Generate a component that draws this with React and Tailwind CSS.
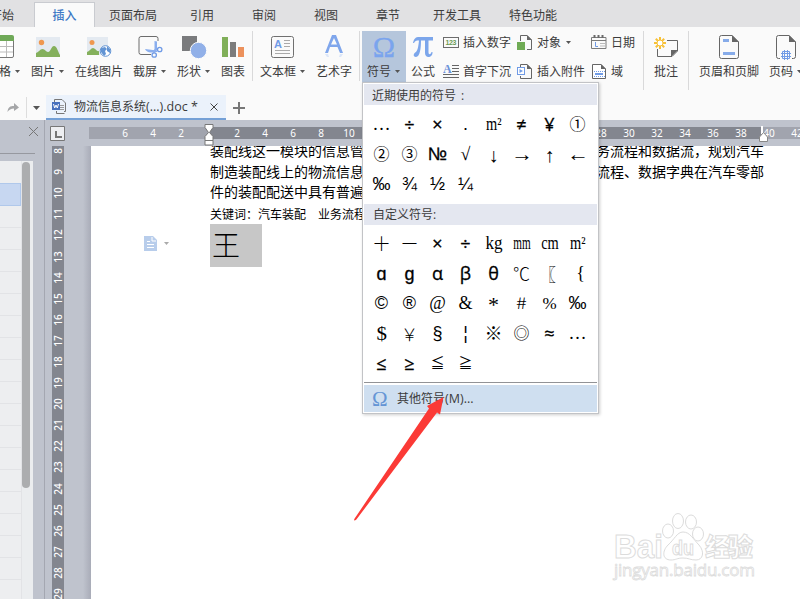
import React from "react";

const UI = "font-['Open_Sans','Noto_Sans_CJK_SC',sans-serif]";

function Arrow({ className = "" }) {
  return (
    <svg className={`h-[3px] w-[5px] shrink-0 ${className}`} viewBox="0 0 5 3" fill="#555">
      <path d="M0 0H5L2.500 3Z" />
    </svg>
  );
}

function Big({ label, arrow, className, icon, children }) {
  return (
    <div className={`flex h-[51px] shrink-0 flex-col ${className}`}>
      <svg className={`h-7 w-7 shrink-0 ${icon}`} viewBox="0 0 28 28" fill="none">
        {children}
      </svg>
      <div className="flex h-[22px] items-center whitespace-nowrap">
        {label}
        {arrow && <Arrow className="ml-1" />}
      </div>
    </div>
  );
}

function Small({ label, arrow, children }) {
  return (
    <div className="flex h-[29px] items-center whitespace-nowrap">
      <svg className="mr-1 h-[17px] w-4 shrink-0" viewBox="0 0 16 17" fill="none">
        {children}
      </svg>
      {label}
      {arrow && <Arrow className="ml-[5px]" />}
    </div>
  );
}

const Separator = ({ className }) => <div className={`w-px shrink-0 bg-[#d9d9da] ${className}`} />;

function MenuTabs() {
  return (
    <div className="flex h-[27px] shrink-0 items-center whitespace-nowrap bg-[#e1e1e3] pt-[5px]">
      <span className="-ml-[10px]">开始</span>
      <span className="ml-5 flex h-[25px] w-[61px] items-center justify-center self-end border border-b-0 border-[#c9cbd0] bg-[#fafafa] pt-px font-medium text-[#3f7ac6]">
        插入
      </span>
      <span className="ml-[14px]">页面布局</span>
      <span className="ml-[33px]">引用</span>
      <span className="ml-[38px]">审阅</span>
      <span className="ml-[38px]">视图</span>
      <span className="ml-[38px]">章节</span>
      <span className="ml-[33px]">开发工具</span>
      <span className="ml-[28px]">特色功能</span>
    </div>
  );
}

function Ribbon() {
  return (
    <div className="flex h-[68px] shrink-0 overflow-hidden bg-[#fafafa] pt-1">
      <Big label="表格" arrow className="-ml-[13px] w-11 pt-[2px]" icon="ml-0">
        <path d="M2.500 3.500H25a1.500 1.500 0 0 1 1.500 1.500V23a1.500 1.500 0 0 1-1.500 1.500H2.500Z" fill="#fff" stroke="#777" />
        <path d="M2 2H25a2 2 0 0 1 2 2V8H2Z" fill="#6fa958" />
        <path d="M2 13.500H26M2 19H26M10.500 8V24M19.500 8V24" stroke="#bbb" />
      </Big>
      <Big label="图片" arrow className="w-11 pt-[2px]" icon="ml-[3px]">
        <path d="M2 4H26V24H2Z" fill="#e4eaf1" />
        <circle cx="7.500" cy="9.500" r="2.700" fill="#ef9850" />
        <path d="M2 24V20C5 19 6 16 8.500 16C11 16 12 19 14 19C17 19 17 13 20 13C23 13 24 19 26 22V24Z" fill="#84b05c" />
      </Big>
      <Big label="在线图片" className="w-[58px] pt-[2px]" icon="ml-[10px]">
        <path d="M2 4H23V22H2Z" fill="#e4eaf1" />
        <circle cx="7" cy="9.500" r="2.500" fill="#ef9850" />
        <path d="M2 22V19C5 18 6 15 8 15C10 15 12 19 14 18V22Z" fill="#84b05c" />
        <circle cx="20.500" cy="18" r="5.300" fill="#fff" stroke="#6294d4" />
        <path d="M16 15L20 14L22 16L20 18L21 21L19 23L16 19ZM22 13L25 16V20L22 18Z" fill="#6294d4" />
      </Big>
      <Big label="截屏" arrow className="w-11 pt-[2px]" icon="ml-[3px]">
        <path d="M15 21.500H5A2 2 0 0 1 3 19.500V5.500A2 2 0 0 1 5 3.500H20A2 2 0 0 1 22 5.500V8" stroke="#6c6c6c" />
        <path d="M18.500 8L21 8.500V17L18 20L16.500 19L18.500 16Z" fill="#8aaeee" />
        <path d="M9 16L21 17.500V19L15 19.500C12 19.500 10 18 9 16Z" fill="#8aaeee" />
        <circle cx="23.700" cy="16.500" r="2.200" stroke="#709be6" strokeWidth="1.300" />
        <circle cx="18.200" cy="22" r="2.200" stroke="#709be6" strokeWidth="1.300" />
      </Big>
      <Big label="形状" arrow className="w-11 pt-[2px]" icon="ml-[3px]">
        <path d="M2 3H17V18H2Z" fill="#7a7b7d" />
        <circle cx="18.500" cy="17.500" r="8.200" fill="#91b0e8" stroke="#fafafa" />
      </Big>
      <Big label="图表" className="w-[31px] pt-[2px]" icon="-ml-[1px]">
        <path d="M2 4H8V24H2Z" fill="#80af59" />
        <path d="M10 9H16V24H10Z" fill="#7c7c7c" />
        <path d="M18 14H24V24H18Z" fill="#ec915c" />
      </Big>
      <Separator className="h-[50px]" />
      <Big label="文本框" arrow className="ml-[7px] w-14 pt-[2px]" icon="ml-[9px]">
        <rect x="2.500" y="3.500" width="22" height="21" rx="2" stroke="#707070" />
        <text x="5" y="15" fontSize="11" fontWeight="700" fontFamily="Liberation Sans" fill="#709be6">A</text>
        <path d="M15 7.500H21M15 10.500H21M15 13.500H21M6 17.500H21M6 20.500H21" stroke="#aaa" />
      </Big>
      <Big label="艺术字" className="w-[43px] pt-[2px]" icon="ml-1">
        <path d="M5 20L12 2H16L23 20H20L17.500 14H10L8 20ZM11 11.500H17L14 5Z" fill="#7fa6ec" fillRule="evenodd" />
        <path d="M5 21H8L9 24H7ZM20 21H23L21 24H19Z" fill="#dce6f8" />
      </Big>
      <Separator className="h-[50px]" />
      <Big label="符号" arrow className="ml-[2px] w-11 bg-[#b5c6dc] pl-[5px] pt-[2px]" icon="ml-[3px]">
        <text x="14" y="24" textAnchor="middle" fontSize="30" fontFamily="Liberation Serif" fill="#7aa4ee" stroke="#7aa4ee" strokeWidth=".3">Ω</text>
      </Big>
      <Big label="公式" className="ml-[5px] w-[31px] pt-[2px]" icon="-ml-[2px]">
        <path d="M4 10C5 5 7 4 10 4H24V7.500H19.500V19C19.500 22 21.500 22 22.500 19H23.500C24 25 16 26 16 20V7.500H12C12 15 11 24 7 24C3.500 24 4.500 20 7 19C9 17 9.500 12 10 7.500C7 7.500 6 8 5 10Z" fill="#7ca6eb" />
      </Big>
      <div className="-mt-[3px] ml-px w-[74px] shrink-0">
        <Small label="插入数字">
          <rect x=".5" y="3.500" width="15" height="10" stroke="#6c6c6c" />
          <text x="2.500" y="11" fontSize="7" fontWeight="600" textLength="11" fontFamily="Liberation Sans" fill="#6a9b54">123</text>
        </Small>
        <Small label="首字下沉">
          <text x="0" y="9.500" fontSize="12" fontWeight="700" fontFamily="Liberation Serif" fill="#6b91d8">A</text>
          <path d="M9 2.500H16M9 5.500H16M9 8.500H16M0 11.500H16M0 14.500H16" stroke="#666" />
        </Small>
      </div>
      <div className="-mt-[3px] w-[74px] shrink-0">
        <Small label="对象" arrow>
          <path d="M3.500 7V1.500H10L14.500 6V15.500H10" stroke="#666" />
          <path d="M10 1V6H15Z" fill="#666" />
          <path d="M0 8H8V16H0Z" fill="#6fab55" />
        </Small>
        <Small label="插入附件">
          <path d="M3.500 4V1.500H10L14.500 6V15.500H3.500V13" stroke="#666" />
          <path d="M10 1V6H15Z" fill="#666" />
          <rect x=".5" y="4.500" width="7" height="7" fill="#fff" stroke="#709be6" />
          <path d="M2.500 6L6 8L2.500 10Z" fill="#709be6" />
        </Small>
      </div>
      <div className="-mt-[3px] w-[52px] shrink-0">
        <Small label="日期">
          <path d="M.5 3.500H15V14.500H.5ZM.5 6.500H15" stroke="#7c7c7c" />
          <path d="M3.500 1V4M7.500 1V4M11.500 1V4" stroke="#6a6a6a" strokeWidth="2" />
          <path d="M4.500 8V12.500H7" stroke="#709be6" />
          <path d="M9 9.500H14M9 12H14" stroke="#bbb" />
        </Small>
        <Small label="域">
          <path d="M1.500 1.500H10L14.500 6V15.500H1.500Z" fill="#fff" stroke="#666" />
          <path d="M10 1V6H15Z" fill="#666" />
          <path d="M3 8.500H14M3 13.500H14" stroke="#709be6" strokeDasharray="1 1" />
          <path d="M4 11H12" stroke="#709be6" strokeWidth="2" />
        </Small>
      </div>
      <Separator className="h-[59px]" />
      <Big label="批注" className="ml-[10px] w-[34px] pt-[2px]" icon="-ml-[2px]">
        <path d="M5.500 16V23.500H20L25.500 18V7.500H15" stroke="#666" />
        <path d="M19 17H26L19 24Z" fill="#666" />
        <path d="M8 4V16M2 10H14M3.800 5.800L12.200 14.200M12.200 5.800L3.800 14.200" stroke="#f7c138" strokeWidth="2" />
        <circle cx="8" cy="10" r="3" fill="#fff" stroke="#f7c138" />
      </Big>
      <Separator className="h-[59px]" />
      <Big label="页眉和页脚" className="ml-[10px] w-[70px] pt-[2px]" icon="ml-4">
        <path d="M6.500 2.500H17L23.500 9V23.500A2 2 0 0 1 21.500 25.500H6.500A2 2 0 0 1 4.500 23.500V4.500A2 2 0 0 1 6.500 2.500Z" stroke="#666" />
        <path d="M17 2V9H24Z" fill="#666" />
        <path d="M8 6H14V9H8ZM8 19H20V22H8Z" fill="#86abe9" />
      </Big>
      <Big label="页码" arrow className="w-[40px] pt-[2px]" icon="ml-1">
        <path d="M7 25.500H5.500A2 2 0 0 1 3.500 23.500V4.500A2 2 0 0 1 5.500 2.500H16L22.500 9V23.500A2 2 0 0 1 20.500 25.500H19" stroke="#666" />
        <path d="M16 2V9H23Z" fill="#666" />
        <path d="M9.500 18.500H16.500V25.500H9.500ZM8 20.500H18M8 23.500H18M11.500 17V27M14.500 17V27" stroke="#709be6" />
      </Big>
    </div>
  );
}

function DocumentTabs() {
  return (
    <div className="flex h-[25px] shrink-0 items-center bg-[#fafafa]">
      <svg className="ml-[7px] h-4 w-3 shrink-0" viewBox="0 0 12 16">
        <path d="M.5 12C1 7 3 6 7 6V3L12 7.500L7 11V8.500C4 8.500 2 10 .5 12Z" fill="#a5a6a8" />
      </svg>
      <div className="ml-[7px] h-[21px] w-px bg-[#ddd]" />
      <svg className="ml-[6px] h-1 w-[7px]" viewBox="0 0 7 4"><path d="M0 0H7L3.500 4Z" fill="#555" /></svg>
      <div className="ml-[6px] flex h-[25px] w-[180px] items-center whitespace-nowrap border-b-2 border-[#74a0d6] bg-[#ebf2fb] pl-[6px]">
        <svg className="h-[15px] w-[15px] shrink-0" viewBox="0 0 15 15" fill="none">
          <path d="M2.500 3V.500H10L13.500 4V12.500H12M4.500 12V14.500H12.500" stroke="#777" />
          <path d="M8 6.500H12M8 8.500H12M8 10.500H12" stroke="#999" />
          <path d="M0 3H8V11H0Z" fill="#4870bd" />
          <path d="M1.500 5L2.700 9L4 6L5.300 9L6.500 5" stroke="#fff" />
        </svg>
        <span className="ml-[7px] w-[136px] pt-px">物流信息系统<span className="text-[12.500px]">(...).doc *</span></span>
        <svg className="h-2 w-2 shrink-0" viewBox="0 0 8 8"><path d="M.5.5L7.500 7.500M7.500.5L.5 7.500" stroke="#444" /></svg>
      </div>
      <svg className="ml-[7px] h-3 w-3" viewBox="0 0 12 12"><path d="M6 0V12M0 6H12" stroke="#777" strokeWidth="2" /></svg>
    </div>
  );
}

function SidePanel() {
  return (
    <div className="flex w-[45px] shrink-0 flex-col border-r border-[#a4a7b1]">
      <div className="flex h-[34px] w-[35px] shrink-0 justify-end border-b border-[#96989f] pt-[7px]">
        <svg className="-mr-[3px] h-[9px] w-[9px]" viewBox="0 0 9 9"><path d="M0 0L9 9M9 0L0 9" stroke="#777" /></svg>
      </div>
      <div className="mt-[7px] flex w-[33px] flex-1 bg-[#ebedef]">
        <div className="w-[22px] shrink-0 border-r border-[#e2e3e6] bg-[#edeef0]">
          <div className="h-[22px]" />
          <div className="h-[23px] border border-l-0 border-[#b0c8eb] bg-[#c7d7f1]" />
          {Array.from({ length: 17 }, (_, i) => (
            <div key={i} className="h-[22px] border-b border-[#e2e3e6]" />
          ))}
        </div>
        <div className="mt-[1px] h-[326px] w-2 rounded-full bg-[#acadaf]" />
      </div>
    </div>
  );
}

const H_RULER = [6, 4, 2, "", ...Array.from({ length: 21 }, (_, i) => (i + 1) * 2)];
const V_RULER = Array.from({ length: 22 }, (_, i) => i + 8);

function HorizontalRuler() {
  return (
    <div className="relative flex h-[26px] shrink-0 items-start pt-[6px]">
      <svg className="ml-[5px] h-[15px] w-[15px] shrink-0" viewBox="0 0 15 15" fill="none">
        <path d="M.5.5H14.500V14.500H.5Z" fill="#eeeff2" stroke="#777" />
        <path d="M6 5V11H12" stroke="#777" strokeWidth="2" />
      </svg>
      <div className="ml-6 mt-[1px] flex h-3 flex-1 overflow-hidden bg-[linear-gradient(to_right,#a1a4ae_120px,#83868f_120px,#83868f_674px,#a1a4ae_674px)] pl-[22px] font-['Noto_Sans',sans-serif] text-[10px] leading-3 text-white">
        {H_RULER.map((n, i) => (
          <span key={i} className="w-7 shrink-0 text-center">{n}</span>
        ))}
      </div>
      <svg className="absolute left-[159px] top-[4px] h-[22px] w-[10px]" viewBox="0 0 10 22" fill="#fff" stroke="#777">
        <path d="M1 .5H9V3.500L5.500 8.500L9 12.500V16.500H1V12.500L4.500 8.500L1 3.500ZM1 16.500H9V21H1Z" />
      </svg>
      <svg className="absolute left-[714px] top-[6px] h-4 w-[9px]" viewBox="0 0 9 16" fill="#fff">
        <path d="M2 0H4V8H2Z" />
        <path d="M4.500 6.500L8.500 11V15.500H.5V11Z" stroke="#888" />
      </svg>
    </div>
  );
}

function Page() {
  return (
    <div className="flex-1 overflow-hidden bg-white pl-[119px] font-['Noto_Sans_CJK_SC',sans-serif] text-black">
      <div className="-mt-[6px] w-[554px] text-[14px] leading-[20.500px]">
        <div className="flex justify-between whitespace-nowrap"><span>装配线这一模块的信息管</span><span>务流程和数据流，规划汽车</span></div>
        <div className="flex justify-between whitespace-nowrap"><span>制造装配线上的物流信息</span><span>流程、数据字典在汽车零部</span></div>
        <div>件的装配配送中具有普遍</div>
      </div>
      <div className="mt-[1px] h-[21px] text-[12px] leading-[21px]">关键词：汽车装配　业务流程</div>
      <div className="-ml-[66px] flex h-[43px] items-center">
        <svg className="-mt-[3px] h-[15px] w-[13px]" viewBox="0 0 13 15" fill="none">
          <path d="M0 0H9L13 4V15H0Z" fill="#b8cdeb" />
          <path d="M8 1V5H12M3 5.500H6M3 8.500H10M3 11.500H10" stroke="#fff" />
        </svg>
        <svg className="-mt-1 ml-[7px] h-[3px] w-[5px]" viewBox="0 0 5 3"><path d="M0 0H5L2.500 3Z" fill="#aaa" /></svg>
        <div className="ml-[41px] flex h-[43px] w-[52px] items-center bg-[#c7c7c7] pb-[2px] pl-[2px] text-[28px] font-light">王</div>
      </div>
    </div>
  );
}

function Workspace() {
  return (
    <div className="flex min-h-0 flex-1 bg-[#bfc3cd]">
      <SidePanel />
      <div className="flex min-w-0 flex-1 flex-col">
        <HorizontalRuler />
        <div className="flex min-h-0 flex-1">
          <div className="ml-[7px] w-3 shrink-0 overflow-hidden bg-[#83868f] font-['Noto_Sans',sans-serif] text-[10px] font-medium text-white">
            <div className="-mt-[5.500px]">
              {V_RULER.map((n) => (
                <div key={n} className="flex h-[21.100px] items-center justify-center"><span className="-rotate-90 leading-3">{n}</span></div>
              ))}
            </div>
          </div>
          <div className="ml-[19px] w-2 shrink-0 bg-gradient-to-r from-[#bfc3cd] to-[#a9acb8]" />
          <Page />
        </div>
      </div>
    </div>
  );
}

const A = "font-['Liberation_Sans',sans-serif] text-[18px]";
const S = "font-['Liberation_Serif',serif] text-[18px]";
const C = "font-['Noto_Sans_CJK_SC',sans-serif] text-[16px] font-light";
const L = "font-['Open_Sans',sans-serif] text-[18px] font-medium [-webkit-text-stroke:0.3px_black]";
const ARROW = "font-['Liberation_Serif',serif] text-[20px] scale-x-110";
const V_ARROW = "font-['Liberation_Serif',serif] text-[20px] translate-y-px";
const M2 = "font-['Liberation_Serif',serif] text-[18px] scale-x-[.8]";
const RING = "font-['Noto_Sans_CJK_SC',sans-serif] text-[16px] -translate-y-px";

const RECENT = [
  ["…", S], ["÷", L], ["×", L], [".", A], ["m²", M2], ["≠", L], ["¥", L], ["①", RING],
  ["②", RING], ["③", RING], ["№", "font-['Liberation_Sans',sans-serif] text-[18px] [-webkit-text-stroke:0.3px_black]"], ["√", S], ["↓", V_ARROW], ["→", ARROW], ["↑", V_ARROW], ["←", ARROW],
  ["‰", A], ["¾", A], ["½", A], ["¼", A],
];

const CUSTOM = [
  ["＋", "font-['Noto_Sans_CJK_SC',sans-serif] text-[19px] font-light -translate-y-px"], ["－", "font-['Noto_Sans_CJK_SC',sans-serif] text-[19px] font-light -translate-y-px"], ["×", L], ["÷", L],
  ["kg", "font-['Liberation_Serif',serif] text-[18px] scale-x-95"], ["mm", "font-['Liberation_Serif',serif] text-[18px] scale-x-[.62]"], ["cm", "font-['Liberation_Serif',serif] text-[18px] scale-x-[.8]"], ["m²", M2],
  ["ɑ", L], ["ɡ", L], ["α", L], ["β", L], ["θ", L], ["℃", "font-['Noto_Sans_CJK_SC',sans-serif] text-[17px] font-light -translate-y-px"], ["〖", "font-['Noto_Sans_CJK_SC',sans-serif] text-[17px] -translate-x-[2px]"], ["{", "font-['Liberation_Serif',serif] text-[18px] translate-x-[3px]"],
  ["©", A], ["®", A], ["@", S], ["&", S], ["*", "font-['Liberation_Serif',serif] text-[22px] translate-y-[2px]"], ["#", "font-['Noto_Sans_CJK_SC',sans-serif] text-[16px] font-light scale-x-125 -translate-y-px"], ["%", "font-['Liberation_Serif',serif] text-[17px]"], ["‰", A],
  ["$", "font-['Liberation_Serif',serif] text-[19px] scale-x-110"], ["￥", "font-['Noto_Sans_CJK_SC',sans-serif] text-[17px] font-light"], ["§", A], ["¦", A], ["※", "font-['Noto_Sans_CJK_SC',sans-serif] text-[18px] font-light -translate-y-px"], ["◎", "font-['Noto_Sans_CJK_SC',sans-serif] text-[16px] -translate-y-px"], ["≈", L], ["…", S],
  ["≤", L], ["≥", L], ["≦", "font-['Noto_Sans_CJK_SC',sans-serif] text-[14px] -translate-y-px"], ["≧", "font-['Noto_Sans_CJK_SC',sans-serif] text-[14px] -translate-y-px"],
];

function SymbolGrid({ items, className }) {
  return (
    <div className={`grid grid-cols-[repeat(8,28px)] pl-[3.500px] text-black ${className}`}>
      {items.map(([glyph, style], i) => (
        <div key={i} className="flex items-center justify-center overflow-visible whitespace-nowrap leading-none">
          <span className={style}>{glyph}</span>
        </div>
      ))}
    </div>
  );
}

function SymbolMenu() {
  return (
    <div className="absolute left-[362px] top-[82px] flex h-[332px] w-[237px] flex-col border border-[#c2c3c6] bg-white p-px shadow-[1px_1px_3px_rgba(0,0,0,0.2)]">
      <div className="flex h-[21px] shrink-0 items-center bg-[#e4e7f0] pl-2 pt-[3px]">近期使用的符号<span className="ml-1 pl-px">:</span></div>
      <SymbolGrid items={RECENT} className="mt-1 auto-rows-[30px]" />
      <div className="mt-[5px] flex h-[21px] shrink-0 items-center bg-[#e4e7f0] pl-[9px]">自定义符号:</div>
      <SymbolGrid items={CUSTOM} className="mt-[3px] auto-rows-[30px]" />
      <div className="mt-1 h-px shrink-0 bg-[#929396]" />
      <div className="mt-[2px] flex h-[27px] shrink-0 items-center bg-[#cfdff0] pl-2">
        <span className="w-[25px] font-['Liberation_Serif',serif] text-[21px] text-[#6595d5]">Ω</span>
        <span>其他符号<span className="text-[12.500px]">(M)...</span></span>
      </div>
    </div>
  );
}

function Pointer() {
  return (
    <svg className="absolute left-[350px] top-[392px] h-[132px] w-[100px]" viewBox="0 0 100 132">
      <path d="M4 128.500L6 128L87 20.500L90 22.500L93.500 5L77 14L79 16.500L4.300 127Z" fill="#fb3a36" />
    </svg>
  );
}

function Watermark() {
  return (
    <svg className="absolute left-[606px] top-[508px] h-[76px] w-[164px]" viewBox="0 0 164 76" fill="#fff" stroke="#dcdcdc">
      <g fontFamily="Liberation Sans" fontWeight="700">
        <text x="8" y="50" fontSize="33" textLength="49" lengthAdjust="spacingAndGlyphs">Bai</text>
        <path d="M77 24C84 24 87 31 93 37C99 44 97 52 90 52C84 52 83 50 77 50C71 50 70 52 65 52C56 52 56 43 62 37C68 32 71 24 77 24Z" />
        <ellipse cx="62" cy="23" rx="5.500" ry="7" />
        <ellipse cx="72" cy="13" rx="5.500" ry="7.500" />
        <ellipse cx="85" cy="14" rx="5.500" ry="7" />
        <ellipse cx="92" cy="26" rx="5.500" ry="7" />
        <text x="66" y="47" fontSize="20" textLength="22" lengthAdjust="spacingAndGlyphs">du</text>
      </g>
      <text x="99" y="48" fontSize="25" fontWeight="900" fontFamily="Noto Sans CJK SC" textLength="48">经验</text>
      <text x="8" y="68" fontSize="17" strokeWidth=".8" fontFamily="Open Sans" textLength="141">jingyan.baidu.com</text>
    </svg>
  );
}

export default function App() {
  return (
    <div className={`relative flex h-[599px] w-[800px] flex-col overflow-hidden text-[12px] leading-4 text-[#3c3c3c] ${UI}`}>
      <MenuTabs />
      <Ribbon />
      <DocumentTabs />
      <Workspace />
      <SymbolMenu />
      <Pointer />
      <Watermark />
    </div>
  );
}
